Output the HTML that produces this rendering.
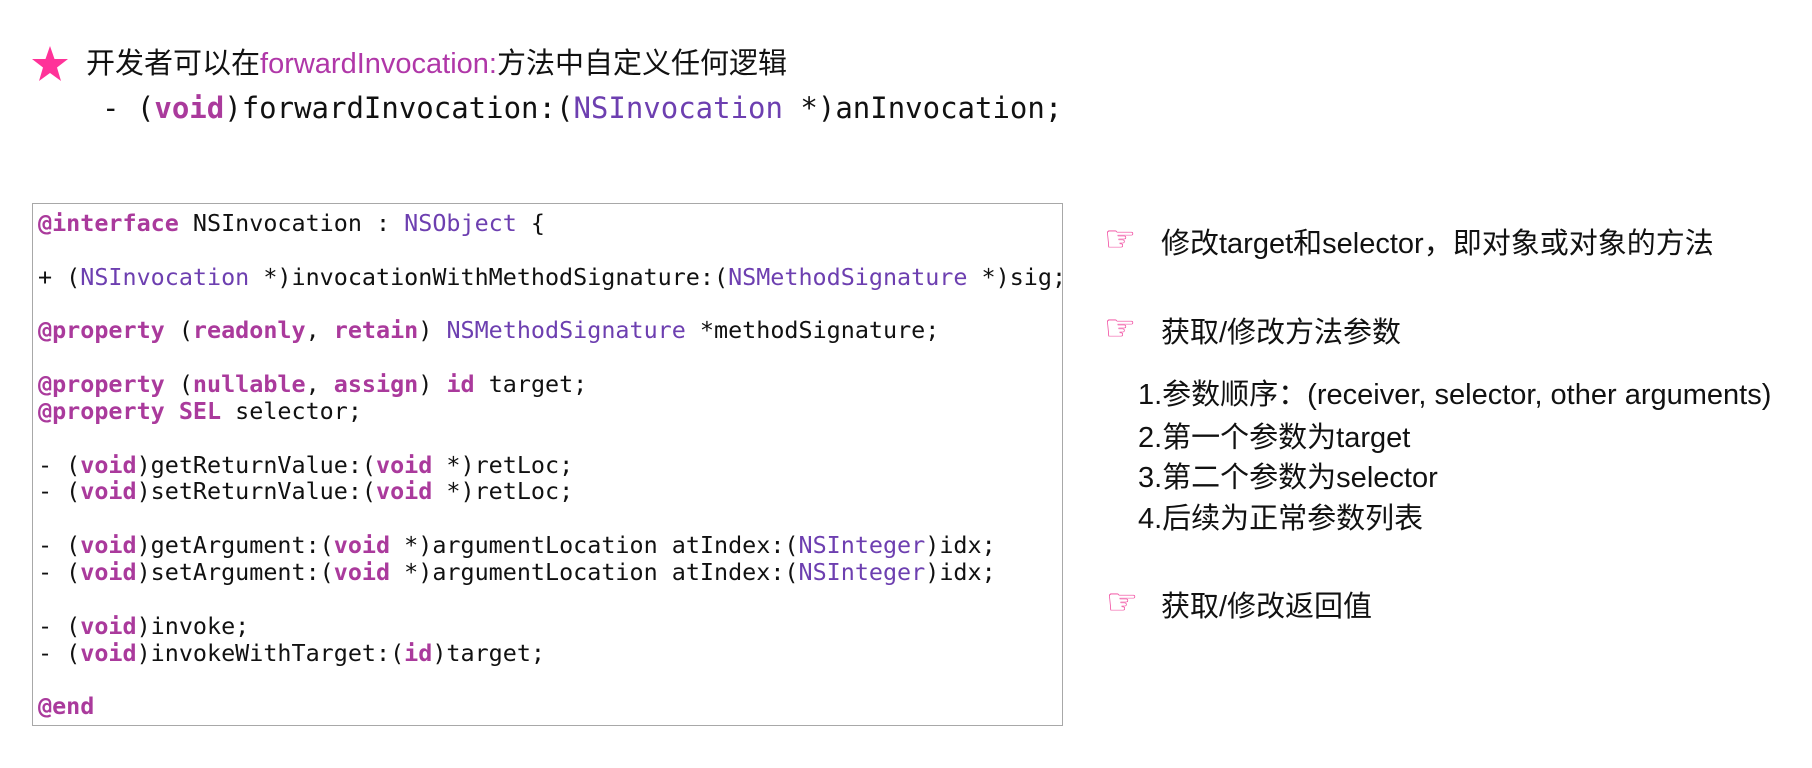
<!DOCTYPE html>
<html><head><meta charset="utf-8"><style>
body{margin:0;width:1812px;height:768px;background:#fff;position:relative;overflow:hidden;font-family:"Liberation Sans","Noto Sans CJK SC",sans-serif;color:#111}
.k{color:#aa3a9c;font-weight:bold}
.t{color:#6d3fb0}
.abs{position:absolute;white-space:pre}
pre{margin:0;font-family:"DejaVu Sans Mono","Liberation Mono",monospace;font-size:23.4px;line-height:26.85px;color:#111}
.hand{color:#f0409a;font-size:36px;line-height:36px;position:absolute;font-family:"DejaVu Sans",sans-serif}
.r{position:absolute;font-size:29px;line-height:34px;white-space:pre}
</style></head><body>
<svg class="abs" style="left:31px;top:45px" width="38" height="38" viewBox="0 0 38 38"><polygon points="19,1 23.5,14 37,14 26,22.5 30,36 19,28 8,36 12,22.5 1,14 14.5,14" fill="#ff3399"/></svg>
<div class="abs" style="left:86px;top:47px;font-size:29px;line-height:34px">开发者可以在<span style="color:#b037a8">forwardInvocation:</span>方法中自定义任何逻辑</div>
<div class="abs" style="left:102px;top:90px;font-family:'DejaVu Sans Mono',monospace;font-size:29px;line-height:36px">- (<span class="k">void</span>)forwardInvocation:(<span class="t">NSInvocation</span> *)anInvocation;</div>
<div style="position:absolute;left:32px;top:203px;width:1029px;height:521px;border:1.5px solid #a8a8a8">
<pre style="padding:6px 0 0 5px"><span class="k">@interface</span> NSInvocation : <span class="t">NSObject</span> {

+ (<span class="t">NSInvocation</span> *)invocationWithMethodSignature:(<span class="t">NSMethodSignature</span> *)sig;

<span class="k">@property</span> (<span class="k">readonly</span>, <span class="k">retain</span>) <span class="t">NSMethodSignature</span> *methodSignature;

<span class="k">@property</span> (<span class="k">nullable</span>, <span class="k">assign</span>) <span class="k">id</span> target;
<span class="k">@property</span> <span class="k">SEL</span> selector;

- (<span class="k">void</span>)getReturnValue:(<span class="k">void</span> *)retLoc;
- (<span class="k">void</span>)setReturnValue:(<span class="k">void</span> *)retLoc;

- (<span class="k">void</span>)getArgument:(<span class="k">void</span> *)argumentLocation atIndex:(<span class="t">NSInteger</span>)idx;
- (<span class="k">void</span>)setArgument:(<span class="k">void</span> *)argumentLocation atIndex:(<span class="t">NSInteger</span>)idx;

- (<span class="k">void</span>)invoke;
- (<span class="k">void</span>)invokeWithTarget:(<span class="k">id</span>)target;

<span class="k">@end</span></pre>
</div>
<div class="hand" style="left:1104px;top:222px">☞</div>
<div class="r" style="left:1161px;top:227px">修改target和selector，即对象或对象的方法</div>
<div class="hand" style="left:1104px;top:311px">☞</div>
<div class="r" style="left:1161px;top:316px">获取/修改方法参数</div>
<div class="r" style="left:1138px;top:378px">1.参数顺序：(receiver, selector, other arguments)</div>
<div class="r" style="left:1138px;top:421px">2.第一个参数为target</div>
<div class="r" style="left:1138px;top:461px">3.第二个参数为selector</div>
<div class="r" style="left:1138px;top:502px">4.后续为正常参数列表</div>
<div class="hand" style="left:1106px;top:585px">☞</div>
<div class="r" style="left:1161px;top:590px">获取/修改返回值</div>
</body></html>
